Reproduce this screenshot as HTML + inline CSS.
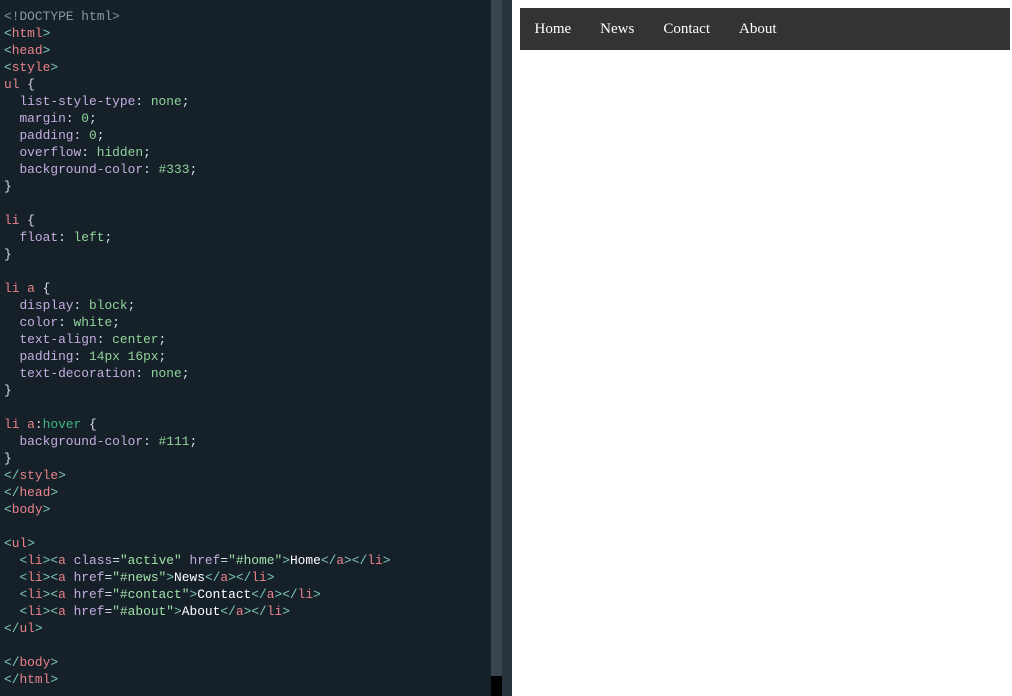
<!DOCTYPE html>
<html><head><style>
body{margin:0;width:1012px;height:696px;overflow:hidden;background:#fff;position:relative}
#code{position:absolute;left:0;top:0;width:491px;height:696px;background:#162029;}
pre{margin:0;padding:8px 0 0 4px;font:12.88px/17px "Liberation Mono",monospace;color:#d8dde3;white-space:pre}
.t{color:#e8838b}.b{color:#7ec9b6}.p{color:#c3aee0}.v{color:#8fd49a}.s{color:#9fe0a8}.c{color:#8c96a0}.w{color:#fff}.h{color:#3fb57f}
#sb{position:absolute;left:491px;top:0;width:11px;height:696px;background:#3a4550}
#th{position:absolute;left:491px;top:676px;width:11px;height:20px;background:#000}
#dv{position:absolute;left:502px;top:0;width:10px;height:696px;background:#29333d}
ul{position:absolute;left:520px;top:8px;width:490px;list-style:none;margin:0;padding:0;overflow:hidden;background:#333}
li{float:left}li a{display:block;color:#fff;padding:12.5px 14.5px 12.5px;font:15px/17px "Liberation Serif",serif;text-decoration:none}
</style></head><body>
<div id="code"><pre><span class="c">&lt;!DOCTYPE html&gt;</span>
<span class="b">&lt;</span><span class="t">html</span><span class="b">&gt;</span>
<span class="b">&lt;</span><span class="t">head</span><span class="b">&gt;</span>
<span class="b">&lt;</span><span class="t">style</span><span class="b">&gt;</span>
<span class="t">ul</span> {
  <span class="p">list-style-type</span>: <span class="v">none</span>;
  <span class="p">margin</span>: <span class="v">0</span>;
  <span class="p">padding</span>: <span class="v">0</span>;
  <span class="p">overflow</span>: <span class="v">hidden</span>;
  <span class="p">background-color</span>: <span class="v">#333</span>;
}

<span class="t">li</span> {
  <span class="p">float</span>: <span class="v">left</span>;
}

<span class="t">li a</span> {
  <span class="p">display</span>: <span class="v">block</span>;
  <span class="p">color</span>: <span class="v">white</span>;
  <span class="p">text-align</span>: <span class="v">center</span>;
  <span class="p">padding</span>: <span class="v">14px 16px</span>;
  <span class="p">text-decoration</span>: <span class="v">none</span>;
}

<span class="t">li a</span>:<span class="h">hover</span> {
  <span class="p">background-color</span>: <span class="v">#111</span>;
}
<span class="b">&lt;/</span><span class="t">style</span><span class="b">&gt;</span>
<span class="b">&lt;/</span><span class="t">head</span><span class="b">&gt;</span>
<span class="b">&lt;</span><span class="t">body</span><span class="b">&gt;</span>

<span class="b">&lt;</span><span class="t">ul</span><span class="b">&gt;</span>
  <span class="b">&lt;</span><span class="t">li</span><span class="b">&gt;&lt;</span><span class="t">a</span> <span class="p">class</span>=<span class="s">"active"</span> <span class="p">href</span>=<span class="s">"#home"</span><span class="b">&gt;</span><span class="w">Home</span><span class="b">&lt;/</span><span class="t">a</span><span class="b">&gt;&lt;/</span><span class="t">li</span><span class="b">&gt;</span>
  <span class="b">&lt;</span><span class="t">li</span><span class="b">&gt;&lt;</span><span class="t">a</span> <span class="p">href</span>=<span class="s">"#news"</span><span class="b">&gt;</span><span class="w">News</span><span class="b">&lt;/</span><span class="t">a</span><span class="b">&gt;&lt;/</span><span class="t">li</span><span class="b">&gt;</span>
  <span class="b">&lt;</span><span class="t">li</span><span class="b">&gt;&lt;</span><span class="t">a</span> <span class="p">href</span>=<span class="s">"#contact"</span><span class="b">&gt;</span><span class="w">Contact</span><span class="b">&lt;/</span><span class="t">a</span><span class="b">&gt;&lt;/</span><span class="t">li</span><span class="b">&gt;</span>
  <span class="b">&lt;</span><span class="t">li</span><span class="b">&gt;&lt;</span><span class="t">a</span> <span class="p">href</span>=<span class="s">"#about"</span><span class="b">&gt;</span><span class="w">About</span><span class="b">&lt;/</span><span class="t">a</span><span class="b">&gt;&lt;/</span><span class="t">li</span><span class="b">&gt;</span>
<span class="b">&lt;/</span><span class="t">ul</span><span class="b">&gt;</span>

<span class="b">&lt;/</span><span class="t">body</span><span class="b">&gt;</span>
<span class="b">&lt;/</span><span class="t">html</span><span class="b">&gt;</span></pre></div>
<div id="sb"></div><div id="th"></div><div id="dv"></div>
<ul><li><a href="#home">Home</a></li><li><a href="#news">News</a></li><li><a href="#contact">Contact</a></li><li><a href="#about">About</a></li></ul>
</body></html>
